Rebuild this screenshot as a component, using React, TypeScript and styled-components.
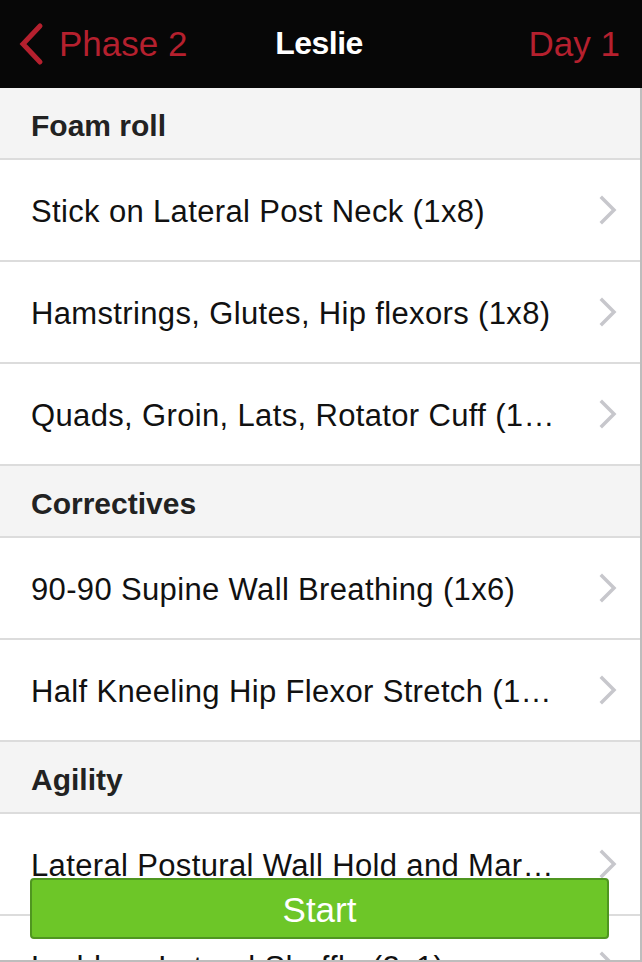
import styled, { createGlobalStyle } from 'styled-components';

const GlobalStyle = createGlobalStyle`
  html, body {
    margin: 0;
    padding: 0;
    background: #fff;
    font-family: "Liberation Sans", Arial, sans-serif;
  }
`;

const Screen = styled.div`
  position: relative;
  width: 642px;
  height: 962px;
  overflow: hidden;
  display: flex;
  flex-direction: column;
`;

const NavBar = styled.div`
  height: 88px;
  flex: none;
  background: #070707;
  display: grid;
  grid-template-columns: 1fr auto 1fr;
  align-items: center;
  padding: 0 22px 0 18px;
`;

const BackButton = styled.div`
  display: flex;
  align-items: center;
  gap: 14px;
  color: #b5202e;
  font-size: 35px;
`;

const Title = styled.div`
  color: #fff;
  font-size: 32px;
  font-weight: bold;
  letter-spacing: -0.5px;
  padding-bottom: 2px;
`;

const DayLabel = styled.div`
  justify-self: end;
  color: #b5202e;
  font-size: 35px;
`;

const Body = styled.div`
  flex: 1;
  overflow: hidden;
  border-right: 2px solid #bdbdbd;
  border-bottom: 2px solid #bdbdbd;
`;

const SectionHeader = styled.div`
  height: 72px;
  box-sizing: border-box;
  background: #f4f4f4;
  border-bottom: 2px solid #dcdcdc;
  display: flex;
  align-items: center;
  padding: 5px 0 0 31px;
  font-size: 30px;
  font-weight: bold;
  color: #222;
`;

const Row = styled.div`
  height: 102px;
  box-sizing: border-box;
  border-bottom: 2px solid #dcdcdc;
  display: flex;
  align-items: center;
  padding: 3px 21px 0 31px;
  background: #fff;
`;

const RowLabel = styled.div`
  flex: 1;
  min-width: 0;
  white-space: nowrap;
  overflow: hidden;
  text-overflow: ellipsis;
  font-size: 31px;
  letter-spacing: 0.35px;
  color: #111;
`;

const StartButton = styled.div`
  position: absolute;
  left: 30px;
  top: 878px;
  width: 579px;
  height: 61px;
  box-sizing: border-box;
  background: #6dc628;
  border: 2px solid #4f9620;
  border-radius: 4px;
  color: #fff;
  font-size: 35px;
  display: flex;
  align-items: center;
  justify-content: center;
  padding-top: 2px;
`;

const Chevron = () => (
  <svg width="20" height="30" viewBox="0 0 20 30" style={{ marginTop: -3 }}>
    <polyline
      points="3,3 15,15 3,27"
      fill="none"
      stroke="#c7c7cc"
      strokeWidth="3.5"
      strokeLinecap="square"
    />
  </svg>
);

const BackChevron = () => (
  <svg width="27" height="44" viewBox="0 0 27 44">
    <polyline
      points="22,4 5,22 22,40"
      fill="none"
      stroke="#b5202e"
      strokeWidth="5"
      strokeLinecap="round"
    />
  </svg>
);

const sections = [
  {
    title: 'Foam roll',
    items: [
      'Stick on Lateral Post Neck (1x8)',
      'Hamstrings, Glutes, Hip flexors (1x8)',
      'Quads, Groin, Lats, Rotator Cuff (1…',
    ],
  },
  {
    title: 'Correctives',
    items: ['90-90 Supine Wall Breathing (1x6)', 'Half Kneeling Hip Flexor Stretch (1…'],
  },
  {
    title: 'Agility',
    items: ['Lateral Postural Wall Hold and Mar…', 'Ladder - Lateral Shuffle (2x1)'],
  },
];

export default function App() {
  return (
    <Screen>
      <GlobalStyle />
      <NavBar>
        <BackButton>
          <BackChevron />
          <span>Phase 2</span>
        </BackButton>
        <Title>Leslie</Title>
        <DayLabel>Day 1</DayLabel>
      </NavBar>
      <Body>
        {sections.map((s) => (
          <div key={s.title}>
            <SectionHeader>{s.title}</SectionHeader>
            {s.items.map((item) => (
              <Row key={item}>
                <RowLabel>{item}</RowLabel>
                <Chevron />
              </Row>
            ))}
          </div>
        ))}
      </Body>
      <StartButton>Start</StartButton>
    </Screen>
  );
}
